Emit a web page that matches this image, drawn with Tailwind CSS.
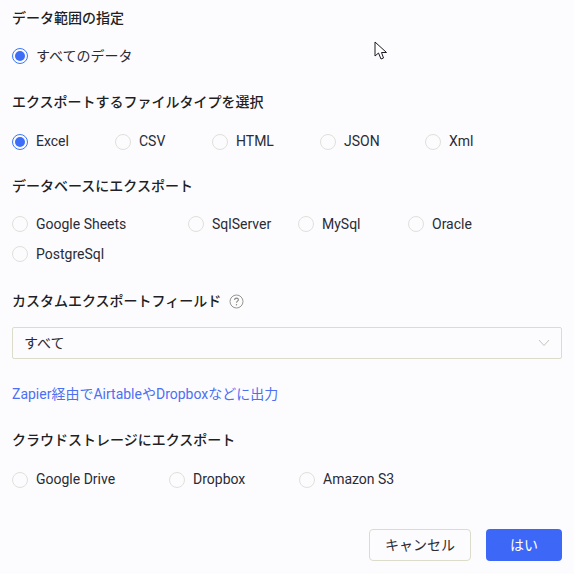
<!DOCTYPE html>
<html lang="ja">
<head>
    <meta charset="UTF-8">
    <title>エクスポート</title>
    <script src="https://cdn.jsdelivr.net/npm/@tailwindcss/browser@4"></script>
</head>
<body class="bg-[#fcfcff] font-['Roboto','Noto_Sans_CJK_JP',sans-serif] text-[14px] text-[#2b2b33]">
    <div class="relative w-[574px] h-[574px] overflow-hidden px-3">
        <!-- mouse cursor -->
        <svg class="absolute left-[374px] top-[41px]" width="14" height="20" viewBox="0 0 14 20">
            <path d="M1 1V15L4.500 12L7 18L9.500 17L7.500 11.500H12.500Z" fill="#fff" stroke="#1a1a22" stroke-width="1"/>
        </svg>

        <section class="h-[84px] pt-[9px]">
            <h2 class="h-[18px] leading-[18px] font-medium text-[#1f1f24]">データ範囲の指定</h2>
            <div class="flex items-center gap-2 mt-[20px] h-[18px]">
                <span class="flex items-center justify-center w-4 h-4 rounded-full border border-[#3b78f6]"><span class="w-[10px] h-[10px] rounded-full bg-[#3d6ef7]"></span></span>
                <span class="leading-[18px]">すべてのデータ</span>
            </div>
        </section>

        <section class="h-[84px] pt-[9px]">
            <h2 class="h-[18px] leading-[18px] font-medium text-[#1f1f24]">エクスポートするファイルタイプを選択</h2>
            <div class="grid grid-cols-[103px_97px_108px_105px_auto] mt-[20px] h-[18px]">
                <div class="flex items-center gap-2">
                    <span class="flex items-center justify-center w-4 h-4 rounded-full border border-[#3b78f6]"><span class="w-[10px] h-[10px] rounded-full bg-[#3d6ef7]"></span></span>
                    <span>Excel</span>
                </div>
                <div class="flex items-center gap-2">
                    <span class="w-4 h-4 rounded-full border border-[#e0e0da]"></span>
                    <span>CSV</span>
                </div>
                <div class="flex items-center gap-2">
                    <span class="w-4 h-4 rounded-full border border-[#e0e0da]"></span>
                    <span>HTML</span>
                </div>
                <div class="flex items-center gap-2">
                    <span class="w-4 h-4 rounded-full border border-[#e0e0da]"></span>
                    <span>JSON</span>
                </div>
                <div class="flex items-center gap-2">
                    <span class="w-4 h-4 rounded-full border border-[#e0e0da]"></span>
                    <span>Xml</span>
                </div>
            </div>
        </section>

        <section class="h-[114px] pt-[9px]">
            <h2 class="h-[18px] leading-[18px] font-medium text-[#1f1f24]">データベースにエクスポート</h2>
            <div class="grid grid-cols-[176px_110px_110px_auto] gap-y-3 mt-[20px]">
                <div class="flex items-center gap-2 h-[18px]">
                    <span class="w-4 h-4 rounded-full border border-[#e0e0da]"></span>
                    <span>Google Sheets</span>
                </div>
                <div class="flex items-center gap-2 h-[18px]">
                    <span class="w-4 h-4 rounded-full border border-[#e0e0da]"></span>
                    <span>SqlServer</span>
                </div>
                <div class="flex items-center gap-2 h-[18px]">
                    <span class="w-4 h-4 rounded-full border border-[#e0e0da]"></span>
                    <span>MySql</span>
                </div>
                <div class="flex items-center gap-2 h-[18px]">
                    <span class="w-4 h-4 rounded-full border border-[#e0e0da]"></span>
                    <span>Oracle</span>
                </div>
                <div class="flex items-center gap-2 h-[18px]">
                    <span class="w-4 h-4 rounded-full border border-[#e0e0da]"></span>
                    <span>PostgreSql</span>
                </div>
            </div>
        </section>

        <section class="pt-[10px]">
            <div class="flex items-center gap-2 h-[18px]">
                <h2 class="leading-[18px] font-medium text-[#1f1f24]">カスタムエクスポートフィールド</h2>
                <svg width="15" height="15" viewBox="0 0 15 15" fill="none">
                    <circle cx="7.500" cy="7.500" r="6.500" stroke="#96968e"/>
                    <path d="M5.600 5.900C5.600 4.800 6.400 4.100 7.500 4.100C8.600 4.100 9.400 4.800 9.400 5.800C9.400 7.200 7.500 7.200 7.500 8.800" stroke="#86867f" stroke-width="1.100"/>
                    <circle cx="7.500" cy="10.700" r="0.700" fill="#86867f"/>
                </svg>
            </div>
            <div class="flex items-center justify-between h-8 mt-[17px] w-[550px] pl-[11px] pr-[11px] border border-[#dcdccb] rounded-[2px]">
                <span>すべて</span>
                <svg width="12" height="8" viewBox="0 0 12 8" fill="none"><path d="M1 1L6 6.500L11 1" stroke="#c4c4be"/></svg>
            </div>
            <a class="block mt-[26px] h-[18px] leading-[18px] text-[#4d6ff2]">Zapier経由でAirtableやDropboxなどに出力</a>
        </section>

        <section class="pt-[28px]">
            <h2 class="h-[18px] leading-[18px] font-medium text-[#1f1f24]">クラウドストレージにエクスポート</h2>
            <div class="grid grid-cols-[157px_130px_auto] mt-[20px] h-[18px]">
                <div class="flex items-center gap-2">
                    <span class="w-4 h-4 rounded-full border border-[#e0e0da]"></span>
                    <span>Google Drive</span>
                </div>
                <div class="flex items-center gap-2">
                    <span class="w-4 h-4 rounded-full border border-[#e0e0da]"></span>
                    <span>Dropbox</span>
                </div>
                <div class="flex items-center gap-2">
                    <span class="w-4 h-4 rounded-full border border-[#e0e0da]"></span>
                    <span>Amazon S3</span>
                </div>
            </div>
        </section>

        <div class="flex justify-end gap-[15px] mt-[42px] w-[550px]">
            <button class="w-[102px] h-8 rounded-[4px] border border-[#dcdccb]">キャンセル</button>
            <button class="w-[76px] h-8 rounded-[4px] bg-[#3d68f7] text-white">はい</button>
        </div>
    </div>
</body>
</html>
